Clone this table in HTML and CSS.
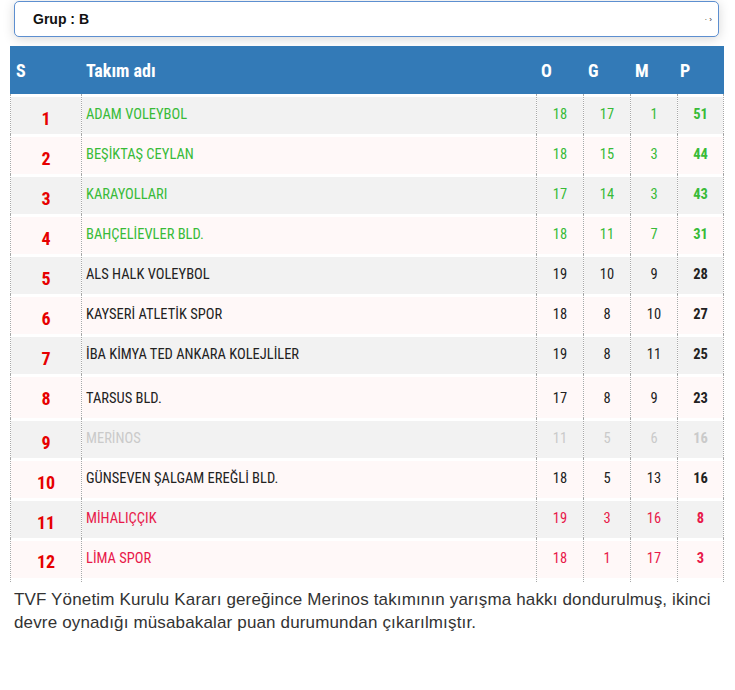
FILE: index.html
```html
<!DOCTYPE html>
<html lang="tr">
<head>
<meta charset="utf-8">
<title>Puan Durumu</title>
<link rel="stylesheet" href="styles.css">
</head>
<body>
<div class="page">
  <div class="select">
    <span class="select-label">Grup : B</span>
    <span class="select-arrow">· ›</span>
  </div>
  <table class="standings">
    <thead>
      <tr>
        <th class="c-rank">S</th>
        <th class="c-name">Takım adı</th>
        <th class="c-num">O</th>
        <th class="c-num">G</th>
        <th class="c-num">M</th>
        <th class="c-num">P</th>
      </tr>
    </thead>
    <tbody>
      <tr class="odd up"><td class="rank">1</td><td class="name">ADAM VOLEYBOL</td><td>18</td><td>17</td><td>1</td><td class="pts">51</td></tr>
      <tr class="even up"><td class="rank">2</td><td class="name">BEŞİKTAŞ CEYLAN</td><td>18</td><td>15</td><td>3</td><td class="pts">44</td></tr>
      <tr class="odd up"><td class="rank">3</td><td class="name">KARAYOLLARI</td><td>17</td><td>14</td><td>3</td><td class="pts">43</td></tr>
      <tr class="even up"><td class="rank">4</td><td class="name">BAHÇELİEVLER BLD.</td><td>18</td><td>11</td><td>7</td><td class="pts">31</td></tr>
      <tr class="odd"><td class="rank">5</td><td class="name">ALS HALK VOLEYBOL</td><td>19</td><td>10</td><td>9</td><td class="pts">28</td></tr>
      <tr class="even"><td class="rank">6</td><td class="name">KAYSERİ ATLETİK SPOR</td><td>18</td><td>8</td><td>10</td><td class="pts">27</td></tr>
      <tr class="odd"><td class="rank">7</td><td class="name">İBA KİMYA TED ANKARA KOLEJLİLER</td><td>19</td><td>8</td><td>11</td><td class="pts">25</td></tr>
      <tr class="even tall"><td class="rank">8</td><td class="name">TARSUS BLD.</td><td>17</td><td>8</td><td>9</td><td class="pts">23</td></tr>
      <tr class="odd out"><td class="rank">9</td><td class="name">MERİNOS</td><td>11</td><td>5</td><td>6</td><td class="pts">16</td></tr>
      <tr class="even"><td class="rank">10</td><td class="name">GÜNSEVEN ŞALGAM EREĞLİ BLD.</td><td>18</td><td>5</td><td>13</td><td class="pts">16</td></tr>
      <tr class="odd down"><td class="rank">11</td><td class="name">MİHALIÇÇIK</td><td>19</td><td>3</td><td>16</td><td class="pts">8</td></tr>
      <tr class="even down last"><td class="rank">12</td><td class="name">LİMA SPOR</td><td>18</td><td>1</td><td>17</td><td class="pts">3</td></tr>
    </tbody>
  </table>
  <p class="note">TVF Yönetim Kurulu Kararı gereğince Merinos takımının yarışma hakkı dondurulmuş, ikinci devre oynadığı müsabakalar puan durumundan çıkarılmıştır.</p>
</div>
</body>
</html>
```
FILE: styles.css
```css
html, body {
  margin: 0;
  padding: 0;
  background: #ffffff;
}

.page {
  padding: 1px 11px 0 10px;
  width: 714px;
}

.select {
  margin: 0 5px 0 4px;
  height: 34px;
  border: 1px solid #5d8fd0;
  border-radius: 5px;
  box-shadow: 0 2px 12px rgba(0, 0, 0, 0.16);
  display: flex;
  align-items: center;
  justify-content: space-between;
  padding: 0 6px 0 18px;
  font-family: "Liberation Sans", Arial, sans-serif;
  background: #fff;
}

.select-label {
  font-size: 14px;
  font-weight: bold;
  color: #111;
}

.select-arrow {
  font-size: 8px;
  color: #333;
}

.standings {
  margin-top: 9px;
  width: 714px;
  border-collapse: separate;
  border-spacing: 0;
  table-layout: fixed;
  font-family: "Roboto Condensed", "Liberation Sans Narrow", "DejaVu Sans Condensed", sans-serif;
}

.standings th {
  background: #337ab7;
  color: #fff;
  font-size: 18px;
  font-weight: bold;
  text-align: left;
  height: 48px;
  padding: 0 0 0 5px;
  box-sizing: border-box;
}

.standings th.c-rank { width: 71px; padding-left: 6px; }
.standings th.c-num { width: 47px; }
.standings th.c-num:last-child { width: 47px; padding-left: 3px; }

.standings td {
  height: 40px;
  box-sizing: border-box;
  padding: 0;
  border-left: 1px dotted #a8a8a8;
  text-align: center;
  font-size: 14.5px;
  color: #222;
  vertical-align: middle;
}

.standings td:last-child {
  border-right: 1px dotted #a8a8a8;
}

.standings tr.odd td {
  background: linear-gradient(#f2f2f2, #f2f2f2) bottom / 100% 37px no-repeat;
}

.standings tr.even td {
  background: linear-gradient(#fff8f8, #fff8f8) bottom / 100% 37px no-repeat;
}

.standings tr.tall td {
  height: 44px;
  padding-top: 4px;
  background-size: 100% 41px;
}

.standings tr.last td {
  height: 44px;
  padding-bottom: 4px;
  background-position: 0 3px;
}

.standings td.rank {
  color: #e60000;
  font-size: 18px;
  font-weight: bold;
  padding-top: 8px;
}

.standings tr.last td.rank {
  padding-top: 6px;
}

.standings td.name {
  text-align: left;
  padding-left: 4px;
}

.standings td.pts {
  font-weight: bold;
}

.standings tr.up td:not(.rank) { color: #38bb38; }
.standings tr.out td:not(.rank) { color: #cacaca; }
.standings tr.down td:not(.rank) { color: #e8194a; }

.note {
  margin: 6px 0 0 4px;
  font-family: "Liberation Sans", Arial, sans-serif;
  font-size: 17px;
  letter-spacing: 0.15px;
  line-height: 23px;
  color: #333;
}
```
